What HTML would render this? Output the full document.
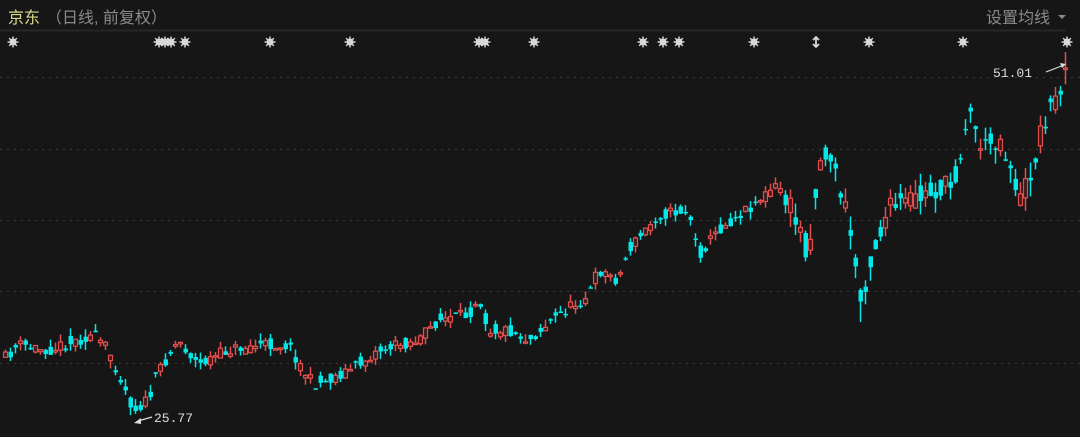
<!DOCTYPE html>
<html><head><meta charset="utf-8"><style>
html,body{margin:0;padding:0;background:#161616;width:1080px;height:437px;overflow:hidden}
svg{display:block}
</style></head><body>
<svg id="s" width="1080" height="437" xmlns="http://www.w3.org/2000/svg">
<rect width="1080" height="437" fill="#161616"/>
<text x="8" y="23" font-family="'Liberation Sans','Noto Sans CJK SC',sans-serif" font-size="16" fill="#d9d98a">京东</text>
<text x="46" y="23" font-family="'Liberation Sans','Noto Sans CJK SC',sans-serif" font-size="16" fill="#8a8a8a">（日线, 前复权）</text>
<text x="986" y="23" font-family="'Liberation Sans','Noto Sans CJK SC',sans-serif" font-size="16" fill="#8a8a8a">设置均线</text>
<path d="M1058 15 L1066 15 L1062 19 Z" fill="#8a8a8a"/>
<line x1="0" y1="30.5" x2="1066" y2="30.5" stroke="#262626" stroke-width="2"/>
<g stroke="#3a3a3a" stroke-width="1" stroke-dasharray="2,5">
<line x1="0" y1="77.5" x2="1080" y2="77.5"/>
<line x1="0" y1="149.5" x2="1080" y2="149.5"/>
<line x1="0" y1="220.5" x2="1080" y2="220.5"/>
<line x1="0" y1="291.5" x2="1080" y2="291.5"/>
<line x1="0" y1="363.5" x2="1080" y2="363.5"/>
</g>
<g id="stars"></g>
<g id="c"></g>
<text x="993" y="77" font-family="'Liberation Mono',monospace" font-size="13" fill="#dddddd">51.01</text>
<path d="M1046 72 L1064 65" stroke="#ddd" stroke-width="1.2"/><path d="M1060 63 L1066 64 L1062 68Z" fill="#ddd"/>
<text x="154" y="422" font-family="'Liberation Mono',monospace" font-size="13" fill="#dddddd">25.77</text>
<path d="M152 417 L138 421" stroke="#ddd" stroke-width="1.2"/><path d="M134 423 L141 418 L141 424Z" fill="#ddd"/>
</svg>
<script>
(function(){
var NS="http://www.w3.org/2000/svg";
function el(n,at,p){var e=document.createElementNS(NS,n);for(var k in at)e.setAttribute(k,at[k]);p.appendChild(e);return e;}
var sg=document.getElementById('stars');
[13,159,165,171,185,270,350,479,485,534,643,663,679,754,869,963,1067].forEach(function(x){
 el('circle',{cx:x,cy:42,r:3.5,fill:'#d8d8d8'},sg);
 for(var i=0;i<8;i++){var an=i*Math.PI/4;el('line',{x1:x,y1:42,x2:x+5.5*Math.cos(an),y2:42+5.5*Math.sin(an),stroke:'#d8d8d8','stroke-width':1.4},sg);}
});
el('path',{d:'M816 37 L816 47 M813 40 L816 37 L819 40 M813 44 L816 47 L819 44',stroke:'#d8d8d8','stroke-width':1.8,fill:'none'},sg);
var K=[[5,360],[20,345],[50,350],[95,335],[110,350],[125,385],[135,410],[150,400],[160,370],[180,340],[200,365],[230,350],[260,345],[290,345],[305,370],[315,385],[330,380],[360,365],[380,350],[420,340],[440,320],[470,315],[480,295],[490,330],[510,330],[530,340],[560,315],[590,295],[600,270],[620,280],[630,250],[660,215],[690,210],[700,255],[720,230],[740,215],[780,185],[800,225],[810,255],[820,165],[830,150],[850,220],[862,300],[875,250],[890,210],[940,190],[955,185],[970,110],[985,150],[1000,135],[1010,160],[1022,200],[1035,165],[1045,120],[1060,95],[1068,65]];
function interp(x){for(var i=0;i<K.length-1;i++){if(x<=K[i+1][0]){var t=(x-K[i][0])/(K[i+1][0]-K[i][0]);return K[i][1]+t*(K[i+1][1]-K[i][1]);}}return K[K.length-1][1];}
var seed=11;function rnd(){seed=(seed*16807)%2147483647;return seed/2147483647;}
var g=document.getElementById('c');
for(var x=5;x<=1068;x+=5){
 var vol=(x>780&&x<1070)?2:1;
 var base=interp(x+2);
 var cl=base+(rnd()-0.5)*12*vol;if(x>=1065)cl=68;
 var op=base+(rnd()-0.5)*14*vol;
 var hi=Math.min(op,cl)-rnd()*8*vol,lo=Math.max(op,cl)+rnd()*8*vol;
 if(x==860){lo=322;}
 var up=cl<op;var col=up?'#e05050':'#00e8e8';
 el('line',{x1:x+0.5,y1:hi.toFixed(1),x2:x+0.5,y2:lo.toFixed(1),stroke:col,'stroke-width':1.5},g);
 var h=Math.max(Math.abs(cl-op),1.5);
 var by=Math.min(op,cl);
 if(up)el('rect',{x:x-1.5,y:by.toFixed(1),width:4,height:h.toFixed(1),fill:'#3a1a1a',stroke:col,'stroke-width':1.2},g);
 else el('rect',{x:x-1.5,y:by.toFixed(1),width:4.5,height:h.toFixed(1),fill:col},g);
}
})();
</script>
</body></html>
